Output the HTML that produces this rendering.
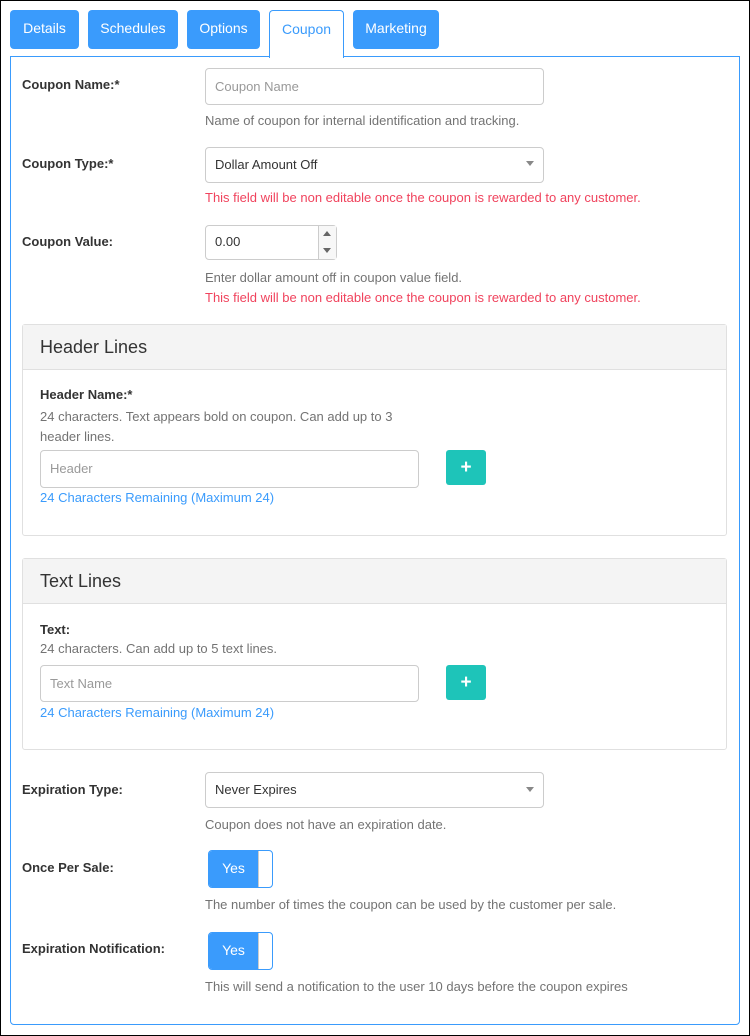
<!DOCTYPE html>
<html><head><style>
*{box-sizing:border-box;margin:0;padding:0}
body{width:750px;height:1036px;position:relative;background:#fff;font-family:"Liberation Sans",Arial,sans-serif;font-size:13px;color:#333;overflow:hidden}
.frame{position:absolute;left:0;top:0;width:750px;height:1036px;border:1px solid #000}
.a{position:absolute}
.tab{position:absolute;top:10px;height:39px;background:#3a9bfc;color:#fff;border-radius:4px;font-size:14px;text-align:center;line-height:37px}
.panel{position:absolute;left:10px;top:56px;width:730px;height:969px;border:1px solid #3a9bfc;border-radius:0 0 4px 4px}
.lbl{position:absolute;left:22px;font-weight:bold;font-size:13px;color:#333}
.inp{position:absolute;border:1px solid #ccc;border-radius:4px;background:#fff;font-size:13px;padding-left:9px;color:#999}
.help{position:absolute;left:205px;font-size:13px;color:#737373}
.red{position:absolute;left:205px;font-size:13px;color:#f0435d}
.box{position:absolute;left:22px;width:705px;border:1px solid #e0e0e0;border-radius:3px}
.box .hd{height:45px;background:#f4f4f4;border-bottom:1px solid #e0e0e0;font-size:18px;color:#333;padding:12px 0 0 17px}
.plus{position:absolute;width:40px;height:35px;background:#1ec4b9;border-radius:3px;color:#fff;font-size:19px;font-weight:bold;text-align:center;line-height:35px}
.link{position:absolute;left:40px;color:#3a9bfc;font-size:13px}
.caret{position:absolute;width:0;height:0;border-left:4px solid transparent;border-right:4px solid transparent;border-top:5px solid #888}
.tog{position:absolute;left:208px;width:65px;height:38px;border:1px solid #3a9bfc;border-radius:4px;background:#fff;overflow:hidden}
.tog div{width:50px;height:100%;background:#3a9bfc;color:#fff;font-size:14px;text-align:center;line-height:35px;border-right:1px solid #ccc}
</style></head><body>
<div class="frame"></div>
<div class="tab" style="left:10px;width:69px">Details</div>
<div class="tab" style="left:88px;width:90px">Schedules</div>
<div class="tab" style="left:187px;width:73px">Options</div>
<div class="tab" style="left:353px;width:86px">Marketing</div>
<div class="panel"></div>
<div class="a" style="left:269px;top:10px;width:75px;height:48px;background:#fff;border:1px solid #3a9bfc;border-bottom:none;border-radius:4px 4px 0 0;color:#3a9bfc;font-size:14px;text-align:center;line-height:37px">Coupon</div>

<div class="lbl" style="top:77px">Coupon Name:*</div>
<div class="inp" style="left:205px;top:68px;width:339px;height:37px;line-height:35px">Coupon Name</div>
<div class="help" style="top:113px">Name of coupon for internal identification and tracking.</div>

<div class="lbl" style="top:156px">Coupon Type:*</div>
<div class="inp" style="left:205px;top:147px;width:339px;height:36px;line-height:33px;color:#333">Dollar Amount Off</div>
<div class="caret" style="left:526px;top:161px"></div>
<div class="red" style="top:190px">This field will be non editable once the coupon is rewarded to any customer.</div>

<div class="lbl" style="top:234px">Coupon Value:</div>
<div class="inp" style="left:205px;top:225px;width:132px;height:35px;line-height:31px;color:#333">0.00</div>
<div class="a" style="left:318px;top:226px;width:18px;height:33px;border-left:1px solid #ccc;background:#f7f7f7"></div>
<div class="a" style="left:323px;top:231px;border-left:4px solid transparent;border-right:4px solid transparent;border-bottom:5px solid #666"></div>
<div class="caret" style="left:323px;top:248px;border-top-color:#666"></div>
<div class="help" style="top:270px">Enter dollar amount off in coupon value field.</div>
<div class="red" style="top:290px">This field will be non editable once the coupon is rewarded to any customer.</div>

<div class="box" style="top:324px;height:212px"><div class="hd">Header Lines</div></div>
<div class="lbl" style="left:40px;top:387px">Header Name:*</div>
<div class="help" style="left:40px;top:407px;line-height:20px">24 characters. Text appears bold on coupon. Can add up to 3<br>header lines.</div>
<div class="inp" style="left:40px;top:450px;width:379px;height:38px;line-height:35px">Header</div>
<div class="plus" style="left:446px;top:450px">+</div>
<div class="link" style="top:490px">24 Characters Remaining (Maximum 24)</div>

<div class="box" style="top:558px;height:192px"><div class="hd">Text Lines</div></div>
<div class="lbl" style="left:40px;top:622px">Text:</div>
<div class="help" style="left:40px;top:641px">24 characters. Can add up to 5 text lines.</div>
<div class="inp" style="left:40px;top:665px;width:379px;height:37px;line-height:35px">Text Name</div>
<div class="plus" style="left:446px;top:665px">+</div>
<div class="link" style="top:705px">24 Characters Remaining (Maximum 24)</div>

<div class="lbl" style="top:782px">Expiration Type:</div>
<div class="inp" style="left:205px;top:772px;width:339px;height:36px;line-height:34px;color:#333">Never Expires</div>
<div class="caret" style="left:526px;top:787px"></div>
<div class="help" style="top:817px">Coupon does not have an expiration date.</div>

<div class="lbl" style="top:860px">Once Per Sale:</div>
<div class="tog" style="top:850px"><div>Yes</div></div>
<div class="help" style="top:897px">The number of times the coupon can be used by the customer per sale.</div>

<div class="lbl" style="top:941px">Expiration Notification:</div>
<div class="tog" style="top:932px"><div>Yes</div></div>
<div class="help" style="top:979px">This will send a notification to the user 10 days before the coupon expires</div>
</body></html>
